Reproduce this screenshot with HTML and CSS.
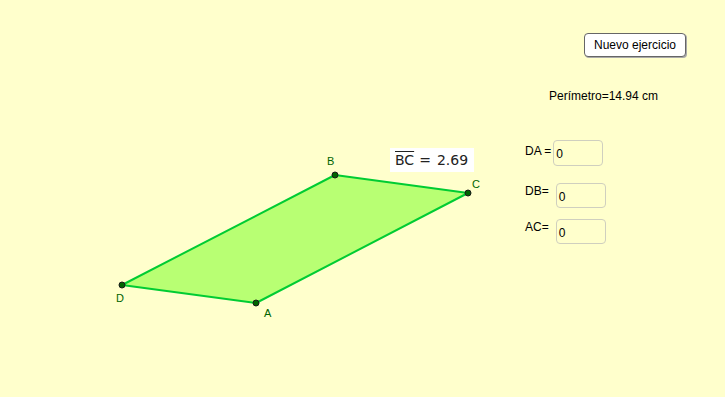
FILE: index.html
```html
<!DOCTYPE html>
<html lang="es">
<head>
<meta charset="utf-8">
<title>Paralelogramo</title>
<link rel="stylesheet" href="styles.css">
</head>
<body>
<div class="applet">
  <svg class="drawing" width="725" height="397" viewBox="0 0 725 397" xmlns="http://www.w3.org/2000/svg">
    <polygon points="122,285 335,175 468,193 256,303" fill="#b8ff73" stroke="#00cc33" stroke-width="2" stroke-linejoin="round"/>
    <circle cx="122" cy="285" r="3" fill="#006400" stroke="#1a1a1a" stroke-width="1"/>
    <circle cx="335" cy="175" r="3" fill="#006400" stroke="#1a1a1a" stroke-width="1"/>
    <circle cx="468" cy="193" r="3" fill="#006400" stroke="#1a1a1a" stroke-width="1"/>
    <circle cx="256" cy="303" r="3" fill="#006400" stroke="#1a1a1a" stroke-width="1"/>
    <text class="pt" x="327" y="165">B</text>
    <text class="pt" x="472" y="188">C</text>
    <text class="pt" x="116" y="302">D</text>
    <text class="pt" x="264" y="317">A</text>
  </svg>

  <div class="measure"><span class="over">BC</span><span class="eq">=</span>2.69</div>

  <button class="btn">Nuevo ejercicio</button>

  <div class="perimeter">Perímetro=14.94 cm</div>

  <div class="field f-da"><span class="lbl">DA =</span><span class="box box-da">0</span></div>
  <div class="field f-db"><span class="lbl">DB=</span><span class="box">0</span></div>
  <div class="field f-ac"><span class="lbl">AC=</span><span class="box">0</span></div>
</div>
</body>
</html>
```

FILE: styles.css
```css
html, body {
  margin: 0;
  padding: 0;
  background: #ffffff;
}
body {
  font-family: "Liberation Sans", Arial, sans-serif;
}
.applet {
  position: relative;
  width: 725px;
  height: 397px;
  background: #ffffcc;
  overflow: hidden;
}
.drawing {
  position: absolute;
  left: 0;
  top: 0;
}
.pt {
  font-family: "Liberation Sans", Arial, sans-serif;
  font-size: 11px;
  fill: #006400;
}
.measure {
  position: absolute;
  left: 390px;
  top: 148px;
  width: 84px;
  height: 24px;
  background: #ffffff;
  font-family: "DejaVu Sans", "Liberation Sans", sans-serif;
  font-size: 14px;
  color: #222222;
  line-height: 25px;
  box-sizing: border-box;
  padding-left: 5px;
  white-space: nowrap;
}
.over {
  text-decoration: overline;
}
.eq {
  padding: 0 6px 0 5px;
}
.btn {
  position: absolute;
  left: 584px;
  top: 33px;
  width: 102px;
  height: 24px;
  padding: 0;
  background: #ffffff;
  border: 1px solid #666666;
  border-radius: 4px;
  box-shadow: 1px 1px 0 #aaaaaa;
  font-family: "Liberation Sans", Arial, sans-serif;
  font-size: 12px;
  color: #000000;
}
.perimeter {
  position: absolute;
  left: 549px;
  top: 89px;
  font-size: 12px;
  color: #000000;
}
.field {
  position: absolute;
  display: flex;
  align-items: flex-start;
  font-size: 12px;
  color: #000000;
}
.f-da { left: 525px; top: 140px; }
.f-db { left: 525px; top: 180px; }
.f-ac { left: 525px; top: 216px; }
.lbl {
  padding-top: 4px;
}
.box {
  box-sizing: border-box;
  width: 50px;
  height: 25px;
  margin-left: 7px;
  margin-top: 3px;
  border: 1px solid #cfcfbf;
  border-radius: 4px;
  background: #ffffcc;
  padding: 6px 0 0 2px;
  font-size: 12px;
}
.box-da {
  margin-left: 2px;
  margin-top: 0;
  height: 26px;
}
```
